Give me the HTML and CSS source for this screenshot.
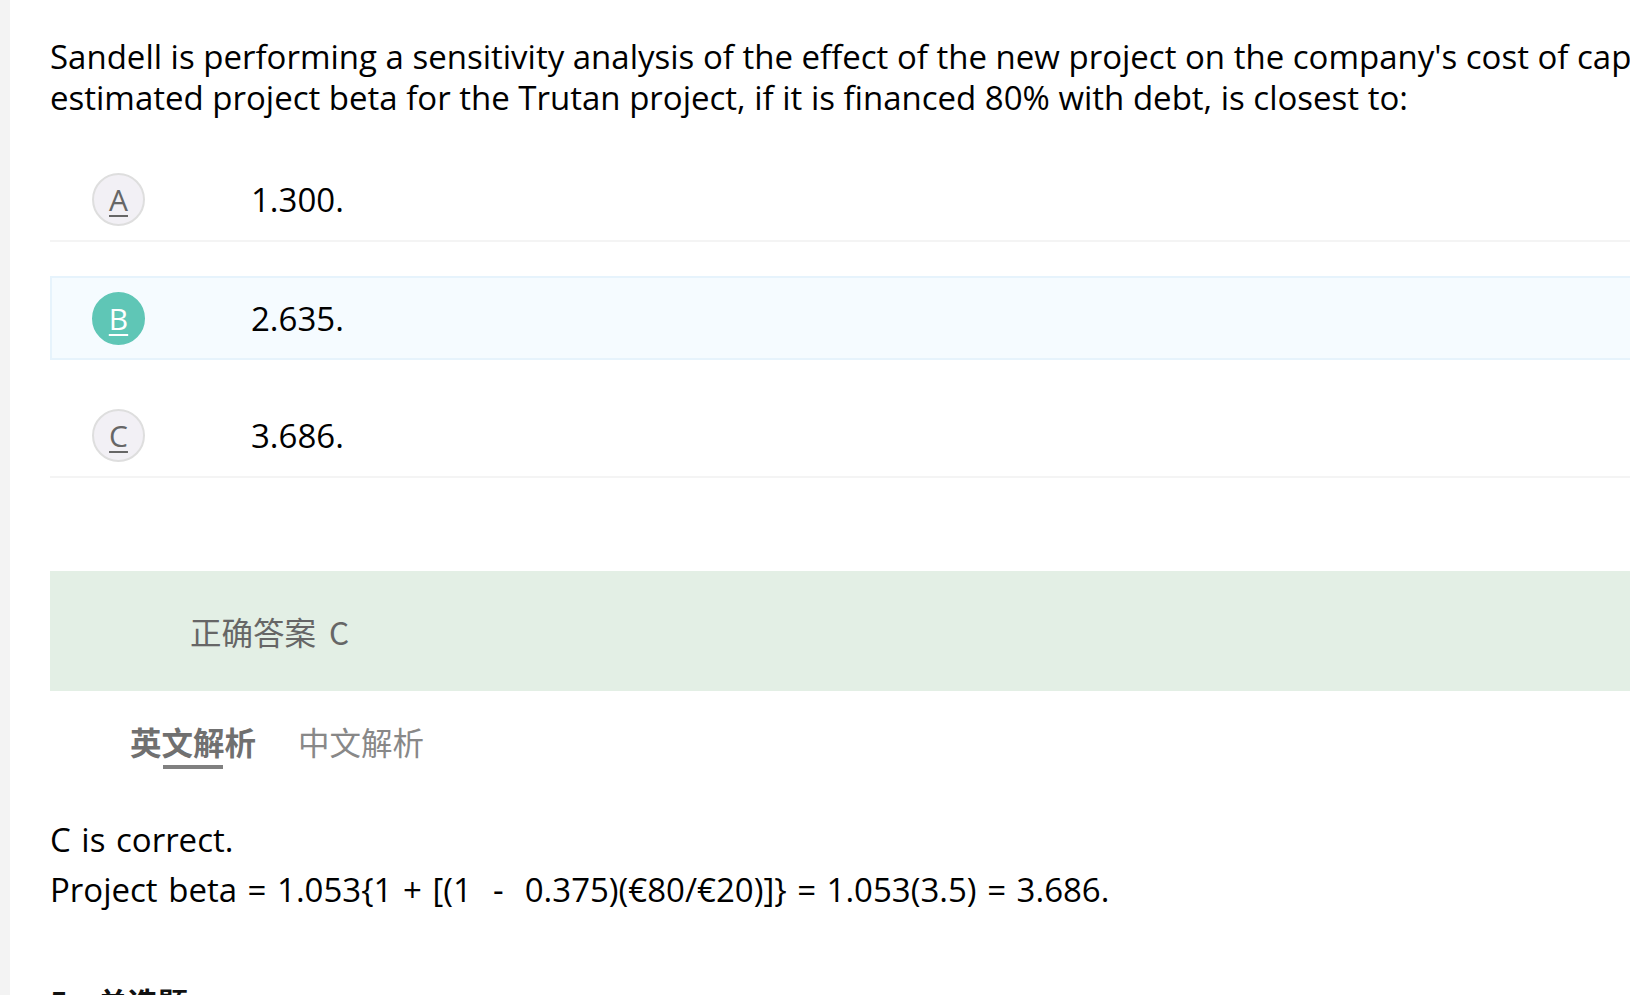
FILE: index.html
```html
<!DOCTYPE html>
<html lang="zh-CN">
<head>
<meta charset="utf-8">
<title>Question</title>
<link rel="stylesheet" href="styles.css">
</head>
<body>
<div class="page">
  <aside class="strip"></aside>
  <main class="content">
    <h3 class="qtype prev">4、单选题</h3>
    <p class="stem">Sandell is performing a sensitivity analysis of the effect of the new project on the company's cost of capital. The<br>estimated project beta for the Trutan project, if it is financed 80% with debt, is closest to:</p>
    <ul class="options">
      <li class="option">
        <span class="badge"><u>A</u></span>
        <span class="otext">1.300.</span>
      </li>
      <li class="option selected">
        <span class="badge"><u>B</u></span>
        <span class="otext">2.635.</span>
      </li>
      <li class="option">
        <span class="badge"><u>C</u></span>
        <span class="otext">3.686.</span>
      </li>
    </ul>
    <div class="answer">正确答案 C</div>
    <div class="tabs">
      <span class="tab active">英文解析</span>
      <span class="tab">中文解析</span>
    </div>
    <div class="explain">
      <p>C is correct.</p>
      <p>Project beta = 1.053{1 + [(1 &nbsp;- &nbsp;0.375)(€80/€20)]} = 1.053(3.5) = 3.686.</p>
    </div>
    <h3 class="qtype next">5、单选题</h3>
  </main>
</div>
</body>
</html>
```

FILE: styles.css
```css
html, body {
  margin: 0;
  padding: 0;
  background: #ffffff;
  overflow: hidden;
  height: 995px;
}

.page {
  display: flex;
  min-height: 995px;
}

.strip {
  flex: 0 0 10px;
  background: #f3f3f3;
}

.content {
  flex: 0 0 1760px;
  margin-left: 40px;
  margin-top: -40px;
  font-family: "Open Sans", "Noto Sans CJK SC", sans-serif;
  color: #000;
}

.qtype {
  margin: 0;
  font-family: "Noto Sans CJK SC", sans-serif;
  font-weight: 700;
  font-size: 30px;
  line-height: 40px;
  color: #111;
}

.stem {
  margin: 36px 0 0;
  font-size: 33px;
  line-height: 41px;
}

.options {
  list-style: none;
  margin: 40px 0 0;
  padding: 0;
  display: flex;
  flex-direction: column;
  gap: 34px;
}

.option {
  display: flex;
  align-items: center;
  height: 82px;
  border-bottom: 2px solid #f4f4f4;
  padding-left: 42px;
}

.option.selected {
  background: #f5fbff;
  border: 2px solid #e6f3fc;
  padding-left: 40px;
  height: 80px;
}

.badge {
  width: 49px;
  height: 49px;
  border-radius: 50%;
  border: 2px solid #dedede;
  background: #f2f0f5;
  color: #666;
  font-size: 30px;
  display: flex;
  align-items: center;
  justify-content: center;
  flex: none;
}

.badge u {
  text-decoration-thickness: 2px;
  text-underline-offset: 4px;
}

.selected .badge {
  background: #5fc6b6;
  border-color: #5fc6b6;
  color: #fff;
}

.otext {
  margin-left: 106px;
  font-size: 33px;
}

.answer {
  margin-top: 93px;
  height: 120px;
  background: #e3efe5;
  display: flex;
  align-items: center;
  padding-left: 140px;
  font-size: 31.5px;
  word-spacing: 6px;
  color: #666;
  font-family: "Noto Sans CJK SC", sans-serif;
}

.tabs {
  display: flex;
  gap: 42px;
  padding-left: 80px;
  margin-top: 28px;
}

.tab {
  font-family: "Noto Sans CJK SC", sans-serif;
  font-size: 31.5px;
  line-height: 44px;
  color: #888;
  padding-bottom: 10px;
  position: relative;
}

.tab.active {
  font-weight: 700;
  color: #707070;
}

.tab.active::after {
  content: "";
  position: absolute;
  left: 50%;
  bottom: 4px;
  width: 60px;
  height: 4px;
  margin-left: -30px;
  background: #808080;
}

.explain {
  margin-top: 42px;
  font-size: 33px;
  word-spacing: 2px;
}

.explain p {
  margin: 0;
  line-height: 50px;
}

.qtype.next {
  margin-top: 66px;
}
```
